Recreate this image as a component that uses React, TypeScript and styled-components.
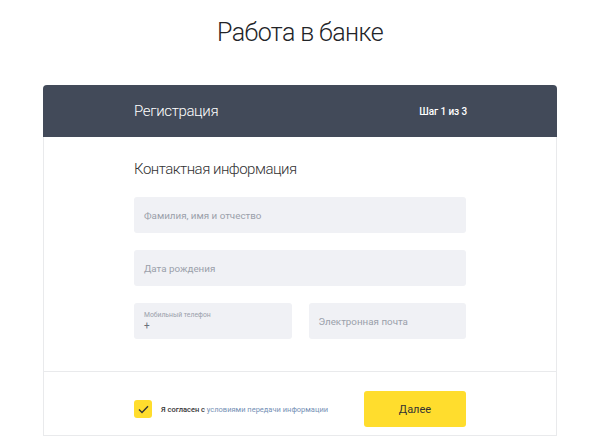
import React from "react";
import styled, { createGlobalStyle } from "styled-components";

const GlobalStyle = createGlobalStyle`
  html, body { margin: 0; padding: 0; background: #ffffff; }
  body { font-family: Roboto, "Liberation Sans", sans-serif; color: #333333; }
  * { box-sizing: border-box; }
`;

const Page = styled.div`
  width: 600px;
  height: 436px;
  overflow: hidden;
  display: flex;
  flex-direction: column;
`;

const PageTitle = styled.h1`
  margin: 0;
  height: 85px;
  padding-top: 16px;
  text-align: center;
  font-weight: 300;
  font-size: 25px;
  line-height: 34px;
  color: #222428;
  letter-spacing: -0.6px;
`;

const Card = styled.section`
  margin: 0 43px;
  border: 1px solid #e9eaec;
  border-top: none;
  border-radius: 4px 4px 0 0;
  flex: 1;
  display: flex;
  flex-direction: column;
`;

const CardHeader = styled.header`
  height: 52px;
  margin: 0 -1px;
  background: #424a59;
  border-radius: 4px 4px 0 0;
  padding: 0 90px 0 91px;
  display: flex;
  align-items: center;
  justify-content: space-between;
  color: #ffffff;
`;

const HeaderTitle = styled.div`
  font-weight: 300;
  font-size: 15px;
  letter-spacing: -0.35px;
`;

const StepText = styled.div`
  font-weight: 500;
  font-size: 10px;
  letter-spacing: -0.1px;
`;

const CardBody = styled.div`
  padding: 20px 90px 32px 90px;
  display: flex;
  flex-direction: column;
  gap: 17px;
  border-bottom: 1px solid #e9eaec;
`;

const SectionTitle = styled.h2`
  margin: 0 0 -1px 0;
  font-weight: 300;
  font-size: 15px;
  line-height: 24px;
  color: #333333;
  letter-spacing: -0.5px;
`;

const Row = styled.div`
  display: flex;
  gap: 17px;
`;

const Field = styled.div`
  flex: 1;
  height: 36px;
  border-radius: 3px;
  background: #f0f1f5;
  padding: 0 10px;
  display: flex;
  flex-direction: column;
  justify-content: center;
  color: #9aa0aa;
  font-size: 9.8px;
`;

const FieldLabel = styled.div`
  font-size: 6.8px;
  line-height: 9px;
  color: #9aa0aa;
`;

const FieldValue = styled.div`
  font-size: 10px;
  line-height: 12px;
  color: #6b717b;
`;

const Footer = styled.div`
  padding: 19px 90px 0 90px;
  display: flex;
  align-items: center;
  justify-content: space-between;
`;

const Agreement = styled.label`
  display: flex;
  align-items: center;
  gap: 9px;
  font-size: 7.5px;
  color: #333333;
  font-weight: 500;
`;

const CheckBox = styled.span`
  width: 18px;
  height: 18px;
  border-radius: 3px;
  background: #ffdd2d;
  display: flex;
  align-items: center;
  justify-content: center;
`;

const Link = styled.span`
  color: #7590b5;
  font-weight: 400;
`;

const NextButton = styled.button`
  width: 102px;
  height: 36px;
  border: none;
  border-radius: 3px;
  background: #ffdd2d;
  font-family: Roboto, "Liberation Sans", sans-serif;
  font-size: 11px;
  color: #333333;
  cursor: pointer;
`;

export default function App() {
  return (
    <>
      <GlobalStyle />
      <Page>
        <PageTitle>Работа в банке</PageTitle>
        <Card>
          <CardHeader>
            <HeaderTitle>Регистрация</HeaderTitle>
            <StepText>Шаг 1 из 3</StepText>
          </CardHeader>
          <CardBody>
            <SectionTitle>Контактная информация</SectionTitle>
            <Row>
              <Field>Фамилия, имя и отчество</Field>
            </Row>
            <Row>
              <Field>Дата рождения</Field>
            </Row>
            <Row>
              <Field>
                <FieldLabel>Мобильный телефон</FieldLabel>
                <FieldValue>+</FieldValue>
              </Field>
              <Field>Электронная почта</Field>
            </Row>
          </CardBody>
          <Footer>
            <Agreement>
              <CheckBox>
                <svg width="11" height="9" viewBox="0 0 11 9">
                  <path d="M1 4.5 L4 7.5 L10 1.2" fill="none" stroke="#333" strokeWidth="1.4" />
                </svg>
              </CheckBox>
              <span>
                Я согласен с <Link>условиями передачи информации</Link>
              </span>
            </Agreement>
            <NextButton>Далее</NextButton>
          </Footer>
        </Card>
      </Page>
    </>
  );
}
